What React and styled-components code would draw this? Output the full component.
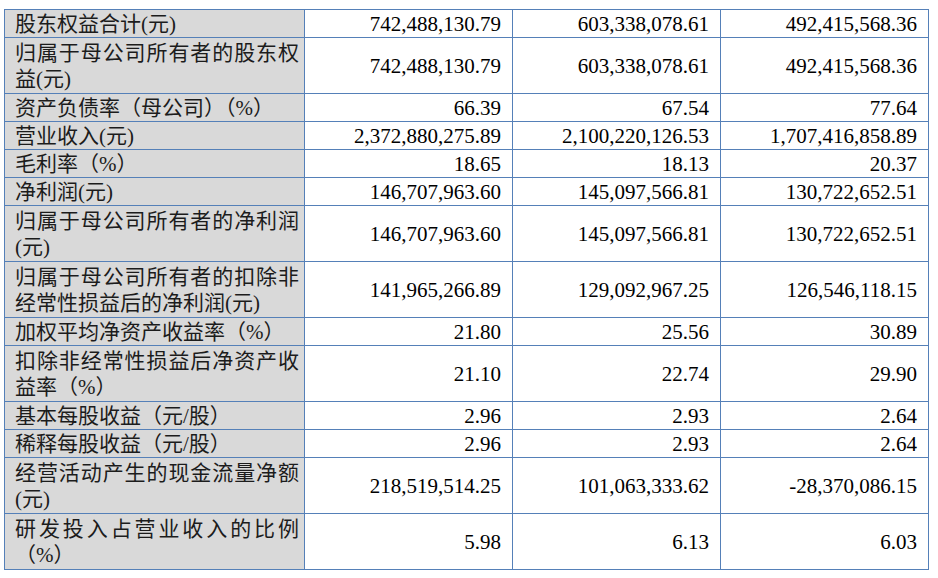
import React from 'react';
import styled, {createGlobalStyle} from 'styled-components';

const GlobalStyle = createGlobalStyle`
  html, body {
    margin: 0;
    padding: 0;
    background: #ffffff;
  }
`;

const Page = styled.div`
  padding: 9px 0 0 4px;
  width: 938px;
  height: 578px;
  box-sizing: border-box;
  background: #ffffff;
`;

const Table = styled.div`
  display: grid;
  grid-template-columns: 300px 208px 208px 208px;
  width: 925px;
  border-top: 1px solid #5580b8;
  border-left: 1px solid #5580b8;
  box-sizing: border-box;
`;

const Cell = styled.div`
  box-sizing: border-box;
  height: ${p => (p.$tall ? 56 : 28)}px;
  border-right: 1px solid #5580b8;
  border-bottom: 1px solid #5580b8;
  display: flex;
  align-items: center;
`;

const Label = styled(Cell)`
  background: #d9d9d9;
  padding: 0 5px 0 10px;
  color: #1c1c1c;
  font-family: "Liberation Serif", "Noto Sans CJK SC", serif;
  font-size: 21px;
  line-height: 26px;
`;

const LabelText = styled.div`
  width: 100%;
  text-align: justify;
`;

const Value = styled(Cell)`
  justify-content: flex-end;
  padding-right: 11px;
  color: #000000;
  font-family: "Liberation Serif", "Times New Roman", serif;
  font-size: 21px;
  line-height: 26px;
`;

const rows = [
  ['股东权益合计(元)', '742,488,130.79', '603,338,078.61', '492,415,568.36'],
  ['归属于母公司所有者的股东权益(元)', '742,488,130.79', '603,338,078.61', '492,415,568.36', true],
  ['资产负债率（母公司）（%）', '66.39', '67.54', '77.64'],
  ['营业收入(元)', '2,372,880,275.89', '2,100,220,126.53', '1,707,416,858.89'],
  ['毛利率（%）', '18.65', '18.13', '20.37'],
  ['净利润(元)', '146,707,963.60', '145,097,566.81', '130,722,652.51'],
  ['归属于母公司所有者的净利润(元)', '146,707,963.60', '145,097,566.81', '130,722,652.51', true],
  ['归属于母公司所有者的扣除非经常性损益后的净利润(元)', '141,965,266.89', '129,092,967.25', '126,546,118.15', true],
  ['加权平均净资产收益率（%）', '21.80', '25.56', '30.89'],
  ['扣除非经常性损益后净资产收益率（%）', '21.10', '22.74', '29.90', true],
  ['基本每股收益（元/股）', '2.96', '2.93', '2.64'],
  ['稀释每股收益（元/股）', '2.96', '2.93', '2.64'],
  ['经营活动产生的现金流量净额(元)', '218,519,514.25', '101,063,333.62', '-28,370,086.15', true],
  ['研发投入占营业收入的比例（%）', '5.98', '6.13', '6.03', true],
];

export default function App() {
  return (
    <Page>
      <GlobalStyle/>
      <Table>
        {rows.map(([label, a, b, c, tall]) => (
          <React.Fragment key={label}>
            <Label $tall={tall}><LabelText>{label}</LabelText></Label>
            <Value $tall={tall}>{a}</Value>
            <Value $tall={tall}>{b}</Value>
            <Value $tall={tall}>{c}</Value>
          </React.Fragment>
        ))}
      </Table>
    </Page>
  );
}
